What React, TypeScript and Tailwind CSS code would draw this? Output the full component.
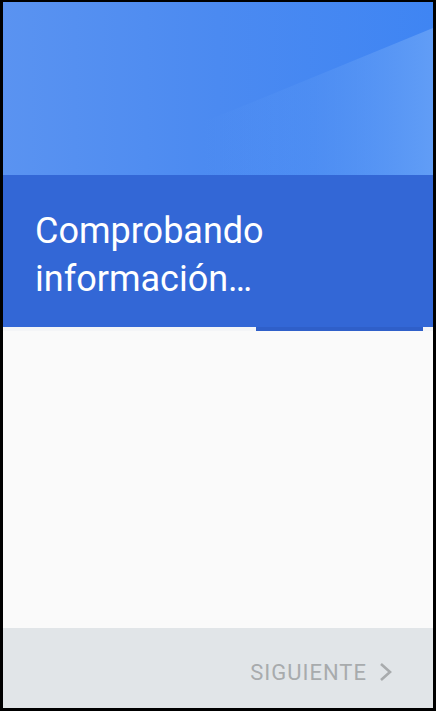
function HeaderArt() {
  return (
    <svg className="h-full w-full" viewBox="0 0 430 173" preserveAspectRatio="none">
      <defs>
        <linearGradient id="base" x1="0" y1="0" x2="1" y2="0">
          <stop offset="0" stopColor="#5a93f1" />
          <stop offset="0.5" stopColor="#4b8af1" />
          <stop offset="1" stopColor="#3f85f3" />
        </linearGradient>
        <linearGradient id="light" x1="0" y1="0" x2="1" y2="0">
          <stop offset="0" stopColor="#5f9cf6" stopOpacity="0" />
          <stop offset="0.45" stopColor="#5a97f4" stopOpacity="0.35" />
          <stop offset="1" stopColor="#619df6" stopOpacity="1" />
        </linearGradient>
      </defs>
      <rect x="0" y="0" width="430" height="173" fill="url(#base)" />
      <polygon points="200,120 262,95 430,26 430,173 200,173" fill="url(#light)" />
    </svg>
  );
}

export default function App() {
  return (
    <div className="h-[711px] w-[436px] bg-black pt-[2px] pl-[3px] pr-[3px] pb-[3px] font-['Roboto',sans-serif]">
      <div className="flex h-full flex-col">
        <div className="h-[173px]">
          <HeaderArt />
        </div>
        <div className="h-[152px] bg-[#3367d6] pl-[32px] pt-[32px]">
          <h1 className="text-[36px] leading-[48px] text-white">
            Comprobando
            <br />
            información…
          </h1>
        </div>
        <div className="h-[4px] bg-[#f4f5f7]">
          <div className="ml-[253px] h-[4px] w-[167px] bg-[#2f5fc9]" />
        </div>
        <div className="flex-1 bg-[#fafafa]" />
        <div className="flex h-[80px] items-center justify-end bg-[#e1e5e8] pt-[8px] pr-[41px]">
          <button className="flex items-center gap-[12px] text-[22px] tracking-[1px] text-[#a8abad]">
            SIGUIENTE
            <svg width="13" height="20" viewBox="0 0 13 20" fill="none">
              <polyline points="2,2 11,10 2,18" stroke="#a8abad" strokeWidth="2.6" strokeLinecap="butt" strokeLinejoin="miter" />
            </svg>
          </button>
        </div>
      </div>
    </div>
  );
}
